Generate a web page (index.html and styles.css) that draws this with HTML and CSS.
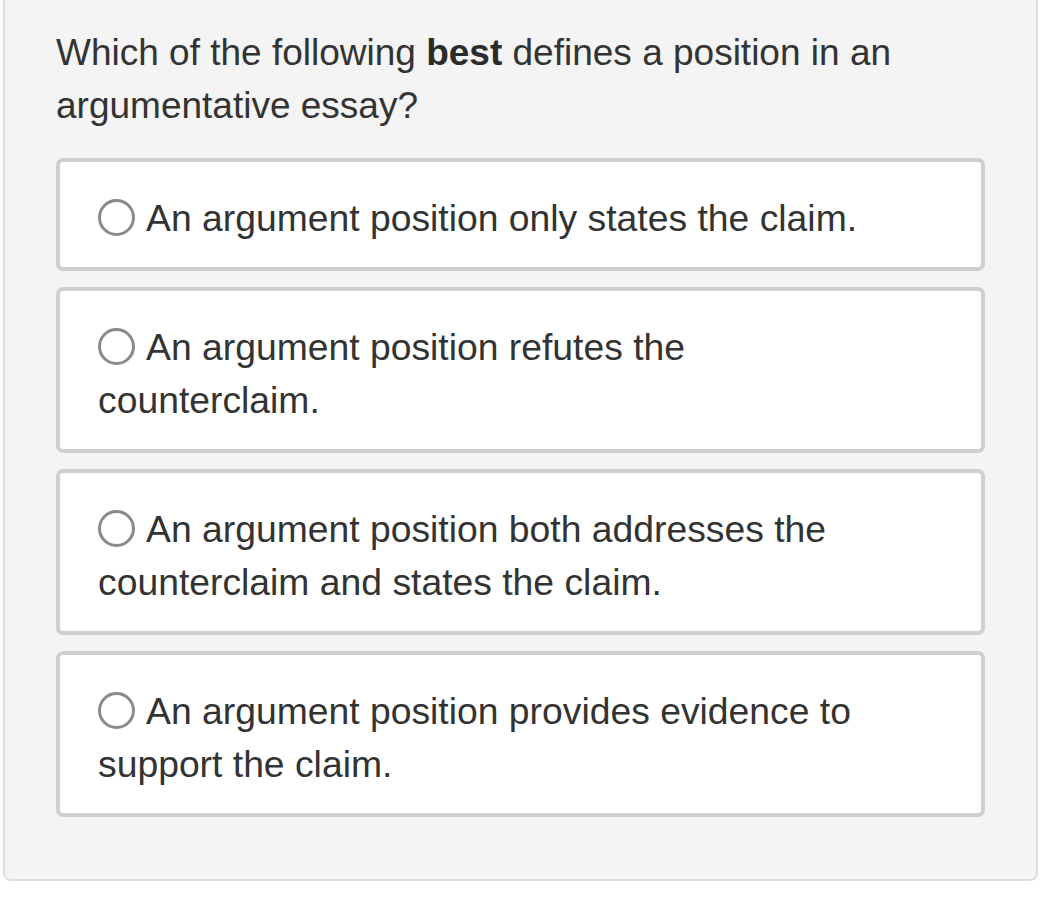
FILE: index.html
```html
<!DOCTYPE html>
<html lang="en">
<head>
    <meta charset="UTF-8">
    <meta name="viewport" content="width=device-width, initial-scale=1.0">
    <title>Question</title>
    <link rel="stylesheet" href="styles.css">
</head>
<body>
    <div class="panel">
        <p class="question">Which of the following <b>best</b> defines a position in an argumentative essay?</p>

        <div class="choices">
            <label class="choice"><span class="radio"></span>An argument position only states the claim.</label>
            <label class="choice"><span class="radio"></span>An argument position refutes the counterclaim.</label>
            <label class="choice"><span class="radio"></span>An argument position both addresses the counterclaim and states the claim.</label>
            <label class="choice"><span class="radio"></span>An argument position provides evidence to support the claim.</label>
        </div>
    </div>
</body>
</html>
```
FILE: styles.css
```css
body {
    margin: 0;
    padding: 0;
    font-family: 'Liberation Sans', Arial, sans-serif;
    background-color: #ffffff;
    color: #333333;
}
.panel {
    margin: 0 18px 0 3px;
    padding: 26px 51px 62px 51px;
    background-color: #f4f4f4;
    border: 2px solid #dedede;
    border-top: none;
    border-radius: 0 0 8px 8px;
}
.question {
    margin: 0 0 26px 0;
    font-size: 37px;
    line-height: 53px;
    padding-right: 40px;
}
.question b {
    color: #2b2b2b;
}
.choices {
    display: flex;
    flex-direction: column;
    gap: 16px;
}
.choice {
    display: block;
    padding: 30px 90px 22px 38px;
    background-color: #ffffff;
    border: 4px solid #cfcfcf;
    border-radius: 7px;
    font-size: 37.3px;
    line-height: 53px;
}
.radio {
    display: inline-block;
    width: 31px;
    height: 31px;
    margin-right: 11px;
    border: 3px solid #8a8a8a;
    border-radius: 50%;
    vertical-align: -5px;
}
```
